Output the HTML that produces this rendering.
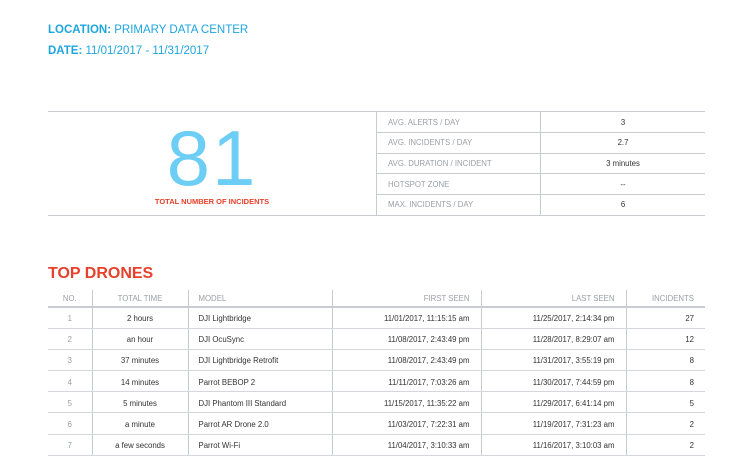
<!DOCTYPE html>
<html><head><style>
*{margin:0;padding:0;box-sizing:border-box}
body{width:750px;height:445px;overflow:hidden;background:#fff;font-family:"Liberation Sans",sans-serif;position:relative}
.hd{position:absolute;left:48px;font-size:11.5px;color:#1ea5df}
.hd b{font-weight:bold}
.sum{position:absolute;left:48px;top:111px;width:657px;height:105px;border-top:1.5px solid #c8ccd0;border-bottom:1.5px solid #c8ccd0}
.big{position:absolute;left:0;width:328px;top:8px;text-align:center;font-size:78px;color:#6ccef5;line-height:76px;letter-spacing:2px}
.tot{position:absolute;left:0;width:328px;top:85px;text-align:center;font-size:7.5px;font-weight:bold;color:#e8402a}
.st{position:absolute;left:328px;top:0;width:329px;border-collapse:collapse}
.st td{height:20.6px;font-size:7.8px;border-left:1px solid #c8ccd0;border-bottom:1px solid #c8ccd0}
.st tr:last-child td{border-bottom:none}
.st td.l{color:#9aa0a6;padding-left:11px;width:164px}
.st td.v{color:#333;text-align:center}
h2{position:absolute;left:48px;top:265px;font-size:16px;color:#e8402a;font-weight:bold}
.dt{position:absolute;left:48px;top:290px;width:657px;border-collapse:collapse;font-size:7.8px}
.dt th{font-weight:normal;color:#9aa0a6;height:17px;border-bottom:2px solid #c8ccd0;border-left:1px solid #c8ccd0}
.dt td{height:21.2px;color:#333;border-bottom:1.5px solid #d4d8dc;border-left:1px solid #c8ccd0;padding-top:2px}
.dt th:first-child,.dt td:first-child{border-left:none;color:#9aa0a6;text-align:center}
.c{text-align:center}.r{text-align:right;padding-right:11px}.m{text-align:left;padding-left:10px}
</style></head><body>
<div class="hd" style="top:24px"><b>LOCATION:</b> PRIMARY DATA CENTER</div>
<div class="hd" style="top:45px"><b>DATE:</b> 11/01/2017 - 11/31/2017</div>
<div class="sum">
<div class="big">81</div>
<div class="tot">TOTAL NUMBER OF INCIDENTS</div>
<table class="st">
<tr><td class="l">AVG. ALERTS / DAY</td><td class="v">3</td></tr>
<tr><td class="l">AVG. INCIDENTS / DAY</td><td class="v">2.7</td></tr>
<tr><td class="l">AVG. DURATION / INCIDENT</td><td class="v">3 minutes</td></tr>
<tr><td class="l">HOTSPOT ZONE</td><td class="v">--</td></tr>
<tr><td class="l">MAX. INCIDENTS / DAY</td><td class="v">6</td></tr>
</table></div>
<h2>TOP DRONES</h2>
<table class="dt">
<tr><th style="width:44px">NO.</th><th style="width:96px">TOTAL TIME</th><th class="m" style="width:144px">MODEL</th><th class="r" style="width:149px">FIRST SEEN</th><th class="r" style="width:145px">LAST SEEN</th><th class="r">INCIDENTS</th></tr>
<tr><td>1</td><td class="c">2 hours</td><td class="m">DJI Lightbridge</td><td class="r">11/01/2017, 11:15:15 am</td><td class="r">11/25/2017, 2:14:34 pm</td><td class="r">27</td></tr>
<tr><td>2</td><td class="c">an hour</td><td class="m">DJI OcuSync</td><td class="r">11/08/2017, 2:43:49 pm</td><td class="r">11/28/2017, 8:29:07 am</td><td class="r">12</td></tr>
<tr><td>3</td><td class="c">37 minutes</td><td class="m">DJI Lightbridge Retrofit</td><td class="r">11/08/2017, 2:43:49 pm</td><td class="r">11/31/2017, 3:55:19 pm</td><td class="r">8</td></tr>
<tr><td>4</td><td class="c">14 minutes</td><td class="m">Parrot BEBOP 2</td><td class="r">11/11/2017, 7:03:26 am</td><td class="r">11/30/2017, 7:44:59 pm</td><td class="r">8</td></tr>
<tr><td>5</td><td class="c">5 minutes</td><td class="m">DJI Phantom III Standard</td><td class="r">11/15/2017, 11:35:22 am</td><td class="r">11/29/2017, 6:41:14 pm</td><td class="r">5</td></tr>
<tr><td>6</td><td class="c">a minute</td><td class="m">Parrot AR Drone 2.0</td><td class="r">11/03/2017, 7:22:31 am</td><td class="r">11/19/2017, 7:31:23 am</td><td class="r">2</td></tr>
<tr><td>7</td><td class="c">a few seconds</td><td class="m">Parrot Wi-Fi</td><td class="r">11/04/2017, 3:10:33 am</td><td class="r">11/16/2017, 3:10:03 am</td><td class="r">2</td></tr>
</table>
</body></html>
